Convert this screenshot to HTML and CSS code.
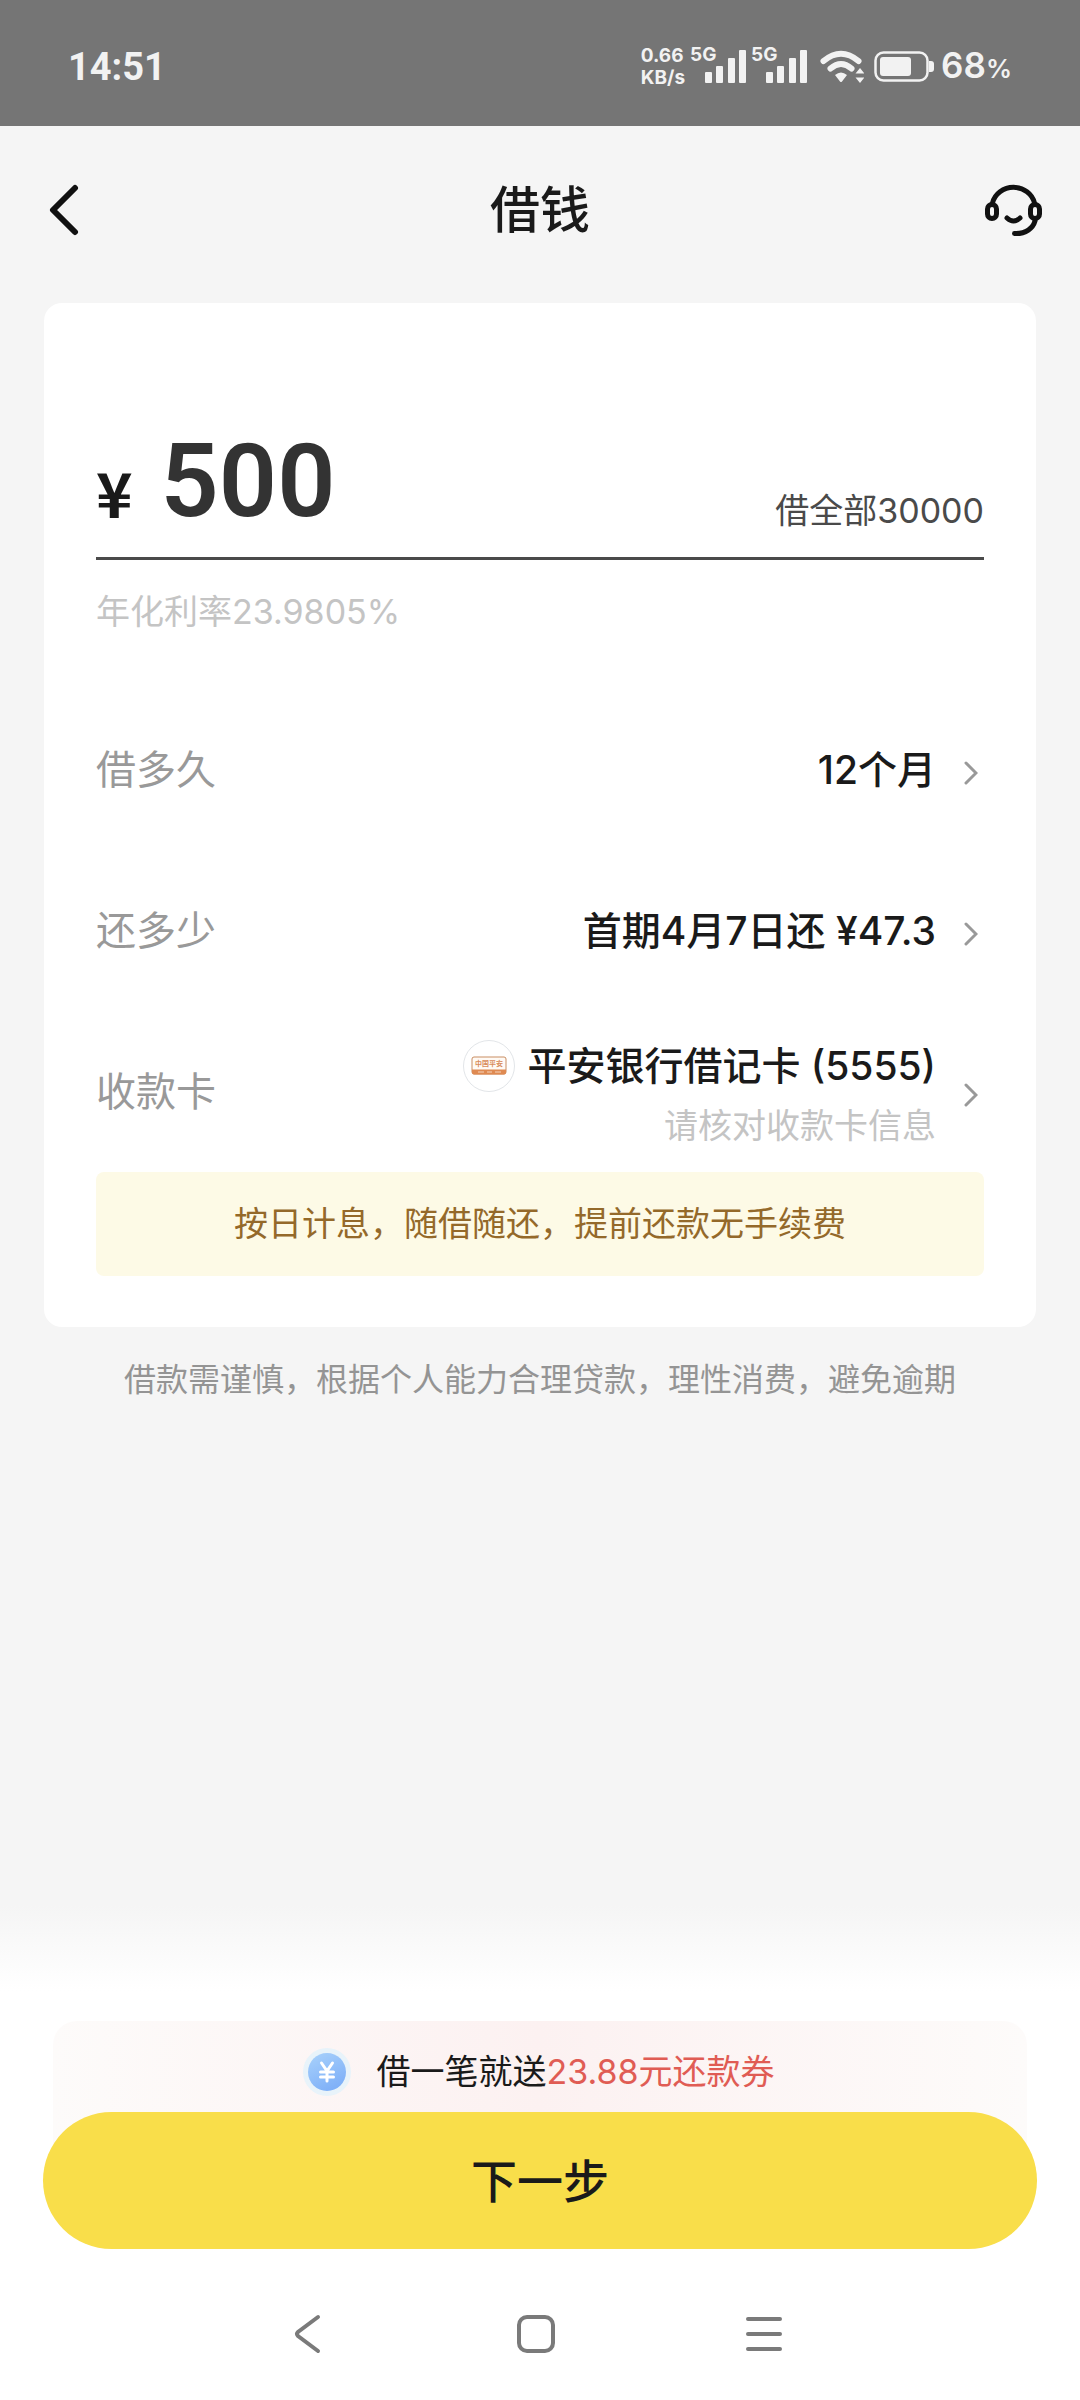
FILE: index.html
```html
<!DOCTYPE html>
<html lang="zh-CN">
<head>
<meta charset="utf-8">
<meta name="viewport" content="width=device-width">
<title>借钱</title>
<link rel="stylesheet" href="styles.css">
</head>
<body>
<div class="status-bar">
  <span class="clock">14:51</span>
  <div class="status-icons">
    <span class="net-speed">0.66<br>KB/s</span>
    <div class="signal">
      <span class="signal-label">5G</span>
      <svg width="41" height="34" viewBox="0 0 41 34" aria-hidden="true"><rect y="22" width="7" height="11" rx="1"/><rect x="11" y="16" width="7" height="17" rx="1"/><rect x="23" y="8" width="7" height="25" rx="1"/><rect x="34" width="7" height="33" rx="1"/></svg>
    </div>
    <div class="signal">
      <span class="signal-label">5G</span>
      <svg width="41" height="34" viewBox="0 0 41 34" aria-hidden="true"><rect y="22" width="7" height="11" rx="1"/><rect x="11" y="16" width="7" height="17" rx="1"/><rect x="23" y="8" width="7" height="25" rx="1"/><rect x="34" width="7" height="33" rx="1"/></svg>
    </div>
    <svg class="wifi" width="44" height="34" viewBox="0 0 44 34" aria-hidden="true">
      <path d="M3.5 11Q21 -3.500 38.500 11M10.500 18.500Q21 9.500 31.500 18.500" fill="none" stroke="#f2f2f2" stroke-width="6" stroke-linecap="round"/>
      <path d="M15 25Q21 20 27 25L22 31.500Q21 32.500 20 31.500ZM40 18l4.500 5.500h-9zM40 33l4.500-5.500h-9z"/>
    </svg>
    <svg class="battery" width="60" height="32" viewBox="0 0 60 32" aria-hidden="true">
      <rect x="1.500" y="1.500" width="52" height="28" rx="8" fill="none" stroke="#f2f2f2" stroke-width="2.500"/>
      <rect x="6" y="6" width="31" height="19" rx="3"/>
      <path d="M55 10h2q3 0 3 3v5q0 3-3 3h-2z"/>
    </svg>
    <span class="charge">68<span class="charge-unit">%</span></span>
  </div>
</div>

<header class="header">
  <button class="icon-button back" type="button" aria-label="返回">
    <svg width="30" height="52" viewBox="0 0 30 52"><path d="M26 4L4 26l22 22" fill="none" stroke="#111" stroke-width="6" stroke-linecap="round" stroke-linejoin="round"/></svg>
  </button>
  <h1 class="title">借钱</h1>
  <button class="icon-button" type="button" aria-label="客服">
    <svg width="58" height="54" viewBox="0 0 58 54" fill="none" stroke="#111" stroke-width="5" stroke-linecap="round"><path d="M7.500 20a21.500 20 0 0 1 42 0M22 35q6.500 6 13 0M50 38c-2 7-9 13-20.500 12.500"/><rect x="2.500" y="21.500" width="9" height="14" rx="4.500"/><rect x="45.500" y="21.500" width="9" height="14" rx="4.500"/></svg>
  </button>
</header>

<main class="main">
  <form class="card" id="loan">
    <div class="amount">
      <label class="currency" for="amount">¥</label>
      <input class="amount-input" id="amount" type="text" inputmode="numeric" value="500">
      <button class="borrow-all" type="button">借全部30000</button>
    </div>
    <p class="rate">年化利率23.9805%</p>
    <button class="row" type="button">
      <span class="row-label">借多久</span>
      <span class="row-value">12个月</span>
      <svg class="chevron" width="14" height="24" viewBox="0 0 14 24"><path d="M2 2l10 10L2 22"/></svg>
    </button>
    <button class="row" type="button">
      <span class="row-label">还多少</span>
      <span class="row-value">首期4月7日还 ¥47.3</span>
      <svg class="chevron" width="14" height="24" viewBox="0 0 14 24"><path d="M2 2l10 10L2 22"/></svg>
    </button>
    <button class="row" type="button">
      <span class="row-label">收款卡</span>
      <span class="row-value bank">
        <span class="bank-name">
          <svg width="52" height="52" viewBox="0 0 52 52" aria-hidden="true">
            <circle cx="26" cy="26" r="25.500" fill="#fff" stroke="#e2e5e8"/>
            <rect x="9" y="17" width="34" height="17" rx="2" fill="#fffaf5" stroke="#c98d62"/>
            <path d="M9 29.500h34v3q0 2-2 2H11q-2 0-2-2z" fill="#df8a52"/>
            <path d="M15 32h6m3 0h5m3 0h6" stroke="#f6d5bd"/>
            <text class="bank-logo-text" x="26" y="26" text-anchor="middle">中国平安</text>
          </svg>
          平安银行借记卡 (5555)
        </span>
        <span class="bank-hint">请核对收款卡信息</span>
      </span>
      <svg class="chevron" width="14" height="24" viewBox="0 0 14 24"><path d="M2 2l10 10L2 22"/></svg>
    </button>
    <p class="notice">按日计息，随借随还，提前还款无手续费</p>
  </form>
  <p class="disclaimer">借款需谨慎，根据个人能力合理贷款，理性消费，避免逾期</p>
</main>

<footer class="footer">
  <div class="promo">
    <svg width="52" height="52" viewBox="0 0 52 52" aria-hidden="true">
      <defs><linearGradient id="coin" x1="0" y1="0" x2="0.500" y2="1"><stop offset="0" stop-color="#a9d2fb"/><stop offset="1" stop-color="#80b1f8"/></linearGradient></defs>
      <circle cx="26" cy="26" r="24" fill="#e8f3fa"/>
      <circle cx="26" cy="26" r="19" fill="url(#coin)"/>
      <path d="M20.500 17l5.500 8 5.500-8M26 25v10M19.500 26h13M19.500 31h13" fill="none" stroke="#fff" stroke-width="3" stroke-linecap="round"/>
    </svg>
    <span>借一笔就送<span class="promo-value">23.88元还款券</span></span>
  </div>
  <button class="next" type="submit" form="loan">下一步</button>
</footer>

<nav class="system-nav">
  <button class="nav-button" type="button" aria-label="后退"><svg width="40" height="40" viewBox="0 0 40 40"><path d="M30 3L10 18q-2 2 0 4L30 37"/></svg></button>
  <button class="nav-button" type="button" aria-label="主页"><svg width="40" height="40" viewBox="0 0 40 40"><rect x="3" y="3" width="34" height="34" rx="8"/></svg></button>
  <button class="nav-button" type="button" aria-label="最近任务"><svg width="40" height="40" viewBox="0 0 40 40"><path d="M4 5h32M4 20h32M4 35h32"/></svg></button>
</nav>
</body>
</html>
```

FILE: styles.css
```css
* {
  box-sizing: border-box;
}

body {
  display: flex;
  flex-direction: column;
  min-height: 100vh;
  margin: 0;
  background: #f5f5f5;
  color: #1a1a1a;
  font-family: Inter, "Noto Sans CJK SC", sans-serif;
  font-size: 34px;
  line-height: 48px;
}

h1,
p {
  margin: 0;
}

button,
input {
  padding: 0;
  border: 0;
  background: none;
  color: inherit;
  font: inherit;
}

svg {
  display: block;
  flex: none;
}

/* Phone status bar */
.status-bar {
  display: flex;
  align-items: center;
  justify-content: space-between;
  height: 126px;
  padding: 8px 68px 0;
  background: #757575;
  color: #f2f2f2;
  fill: #f2f2f2;
}

.clock {
  font-family: Roboto, sans-serif;
  font-size: 38px;
  font-weight: 700;
}

.status-icons {
  display: flex;
  align-items: center;
}

.net-speed {
  font-size: 19px;
  font-weight: 700;
  line-height: 22px;
}

.signal {
  position: relative;
  margin-left: 20px;
}

.signal-label {
  position: absolute;
  top: -7px;
  left: -15px;
  font-size: 19px;
  font-weight: 700;
  line-height: 24px;
}

.wifi {
  margin-left: 13px;
}

.battery {
  margin-left: 10px;
}

.charge {
  margin-left: 7px;
  font-size: 35px;
  font-weight: 600;
}

.charge-unit {
  font-size: 26px;
}

/* Page header */
.header {
  display: flex;
  align-items: center;
  justify-content: space-between;
  height: 168px;
  padding: 0 37px;
}

.icon-button {
  display: flex;
  width: 58px;
}

.back {
  padding-left: 12px;
}

.title {
  font-size: 50px;
  font-weight: 500;
  line-height: 72px;
}

.main {
  flex: 1;
  padding: 9px 44px;
}

.card {
  padding: 118px 52px 51px;
  border-radius: 18px;
  background: #fff;
}

.amount {
  display: flex;
  align-items: flex-end;
  padding-bottom: 16px;
  border-bottom: 3px solid #4a4a4a;
}

.currency {
  font-family: "Noto Sans CJK SC", sans-serif;
  font-size: 62px;
  font-weight: 700;
  line-height: 100px;
}

.amount-input {
  flex: 1;
  min-width: 0;
  height: 120px;
  padding-left: 28px;
  color: #333;
  font-family: Roboto, sans-serif;
  font-size: 102px;
  font-weight: 600;
}

.borrow-all {
  color: #4a4a4a;
  line-height: 60px;
}

.rate {
  padding: 28px 0 53px;
  color: #c4c4c4;
}

.row {
  display: flex;
  align-items: center;
  gap: 28px;
  width: 100%;
  height: 161px;
  padding-right: 6px;
  font-size: 40px;
  line-height: 56px;
}

.row-label {
  flex: 1;
  color: #999;
  text-align: left;
}

.row-value {
  font-size: 39px;
  font-weight: 500;
  text-align: right;
}

.chevron {
  margin-top: 6px;
  fill: none;
  stroke: #999;
  stroke-width: 3;
  stroke-linecap: round;
}

.bank {
  display: flex;
  flex-direction: column;
  gap: 8px;
  padding-top: 4px;
}

.bank-name {
  display: flex;
  align-items: center;
  gap: 12px;
}

.bank-logo-text {
  fill: #d98c5c;
  font-size: 7px;
  font-weight: 700;
}

.bank-hint {
  color: #c4c4c4;
  font-size: 34px;
  font-weight: 400;
  line-height: 48px;
}

.notice {
  padding: 28px 0;
  border-radius: 8px;
  background: #fdfae6;
  color: #94692a;
  text-align: center;
}

.disclaimer {
  padding-top: 29px;
  color: #949494;
  font-size: 32px;
  text-align: center;
}

/* Bottom action area */
.footer {
  padding: 116px 43px 0;
  background: linear-gradient(#f5f5f5, #fff 86px);
}

.promo {
  display: flex;
  align-items: center;
  justify-content: center;
  gap: 23px;
  margin: 0 10px;
  padding: 25px 4px 74px 0;
  border-radius: 24px 24px 0 0;
  background: linear-gradient(90deg, #fdfbfa, #fcf1f1 50%, #fdfbfa);
}

.promo-value {
  color: #e05c54;
}

.next {
  display: block;
  width: 100%;
  height: 137px;
  margin-top: -60px;
  border-radius: 69px;
  background: #f9de4a;
  font-size: 46px;
  font-weight: 500;
}

.system-nav {
  display: flex;
  justify-content: center;
  gap: 188px;
  padding: 65px 8px 46px 0;
  background: #fff;
}

.nav-button svg {
  fill: none;
  stroke: #7a7a7a;
  stroke-width: 4;
  stroke-linecap: round;
}
```
